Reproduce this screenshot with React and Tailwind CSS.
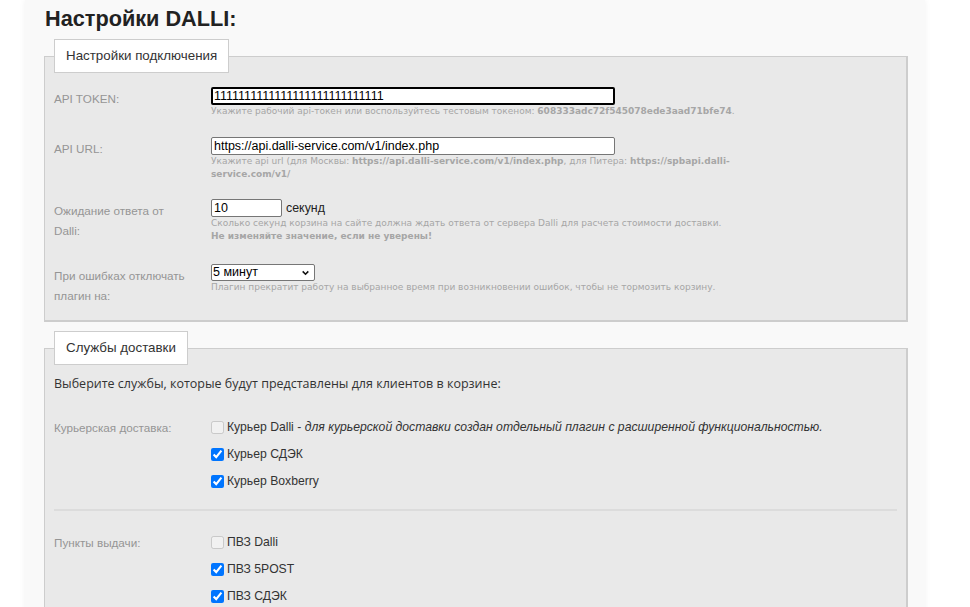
const Row = ({ label, className = "", children }) => (
  <div className={`flex ${className}`}>
    <div className="w-[157px] shrink-0 pt-[2px] text-[11.7px] leading-[20px] text-[#959595]">
      {label}
    </div>
    <div className="flex-1">{children}</div>
  </div>
);

const Hint = ({ children }) => (
  <div className="whitespace-nowrap font-['DejaVu_Sans',sans-serif] text-[9px] leading-[13px] text-[#a6a6a6]">
    {children}
  </div>
);

const Box = ({ title, className = "", children }) => (
  <fieldset
    className={`border border-r-2 border-b-2 border-[#cdcdcd] bg-[#e9e9e9] px-[9px] ${className}`}
  >
    <legend className="border border-[#cdcdcd] bg-white px-[11px] py-[8px] text-[13.35px] leading-[16px] text-[#333]">
      {title}
    </legend>
    {children}
  </fieldset>
);

const Check = ({ checked, disabled, children }) => (
  <label className="flex h-[27px] items-center text-[12.2px] text-[#333]">
    <input
      type="checkbox"
      defaultChecked={checked}
      disabled={disabled}
      className="m-0 mr-[3px] h-[13px] w-[13px]"
    />
    {children}
  </label>
);

const field =
  "block h-[18px] rounded-[2px] bg-white text-[12.5px] text-black outline-none";

export default function App() {
  return (
    <div className="min-h-screen bg-white font-['Liberation_Sans',Arial,sans-serif]">
      <div className="ml-[25px] min-h-screen w-[900px] bg-[#f9f9f9] pl-[19px] pr-[17px] pt-[5px] shadow-[0_0_6px_rgba(0,0,0,0.06)]">
        <h1 className="ml-px mb-[6px] text-[21.7px] font-bold leading-[28px] text-[#222]">
          Настройки DALLI:
        </h1>

        {/* connection settings */}
        <Box title="Настройки подключения" className="pb-[14px]">
          <Row label="API TOKEN:" className="mt-[14px]">
            <input
              defaultValue={"1".repeat(28)}
              className={`${field} w-[404px] border-2 border-black px-[1px]`}
            />
            <Hint>
              Укажите рабочий api-токен или воспользуйтесь тестовым токеном:{" "}
              <b>608333adc72f545078ede3aad71bfe74</b>.
            </Hint>
          </Row>

          <Row label="API URL:" className="mt-[19px]">
            <input
              defaultValue="https://api.dalli-service.com/v1/index.php"
              className={`${field} w-[404px] border border-[#767676] px-[2px]`}
            />
            <Hint>
              Укажите api url (для Москвы: <b>https://api.dalli-service.com/v1/index.php</b>, для
              Питера: <b>https://spbapi.dalli-</b>
            </Hint>
            <Hint>
              <b>service.com/v1/</b>
            </Hint>
          </Row>

          <Row
            label={
              <>
                Ожидание ответа от
                <br />
                Dalli:
              </>
            }
            className="mt-[18px]"
          >
            <div className="flex h-[18px] items-center">
              <input
                defaultValue="10"
                className={`${field} w-[71px] border border-[#767676] px-[2px]`}
              />
              <span className="ml-[4px] text-[12.4px] text-[#222]">секунд</span>
            </div>
            <Hint>
              Сколько секунд корзина на сайте должна ждать ответа от сервера Dalli для расчета
              стоимости доставки.
            </Hint>
            <Hint>
              <b>Не изменяйте значение, если не уверены!</b>
            </Hint>
          </Row>

          <Row
            label={
              <>
                При ошибках отключать
                <br />
                плагин на:
              </>
            }
            className="mt-[21px]"
          >
            <div className="relative h-[17px] w-[104px]">
              <select className="block h-[17px] w-[104px] appearance-none rounded-[2px] border border-[#767676] bg-white pl-[1px] text-[12.5px] leading-[15px] text-black outline-none">
                <option>5 минут</option>
                <option>15 минут</option>
                <option>1 час</option>
              </select>
              <svg
                viewBox="0 0 10 10"
                className="pointer-events-none absolute right-[5px] top-[5px] h-[8px] w-[9px]"
              >
                <path d="M1.5 3 L5 6.5 L8.5 3" fill="none" stroke="#111" strokeWidth="2" />
              </svg>
            </div>
            <Hint>
              Плагин прекратит работу на выбранное время при возникновении ошибок, чтобы не
              тормозить корзину.
            </Hint>
          </Row>
        </Box>

        {/* delivery services */}
        <Box title="Службы доставки" className="mt-[9px] pb-[20px]">
          <p className="mt-[9px] font-['Open_Sans',sans-serif] text-[12.5px] leading-[20px] text-[#333]">
            Выберите службы, которые будут представлены для клиентов в корзине:
          </p>

          <div className="mt-[20px] flex">
            <div className="w-[157px] shrink-0 text-[11.7px] leading-[27px] text-[#959595]">
              Курьерская доставка:
            </div>
            <div>
              <Check disabled>
                Курьер Dalli -&nbsp;
                <i>для курьерской доставки создан отдельный плагин с расширенной функциональностью.</i>
              </Check>
              <Check checked>Курьер СДЭК</Check>
              <Check checked>Курьер Boxberry</Check>
            </div>
          </div>

          <div className="mt-[14px] h-[2px] bg-[#dcdcdc]" />

          <div className="mt-[18px] flex">
            <div className="w-[157px] shrink-0 text-[11.7px] leading-[27px] text-[#959595]">
              Пункты выдачи:
            </div>
            <div>
              <Check disabled>ПВЗ Dalli</Check>
              <Check checked>ПВЗ 5POST</Check>
              <Check checked>ПВЗ СДЭК</Check>
            </div>
          </div>
        </Box>
      </div>
    </div>
  );
}
